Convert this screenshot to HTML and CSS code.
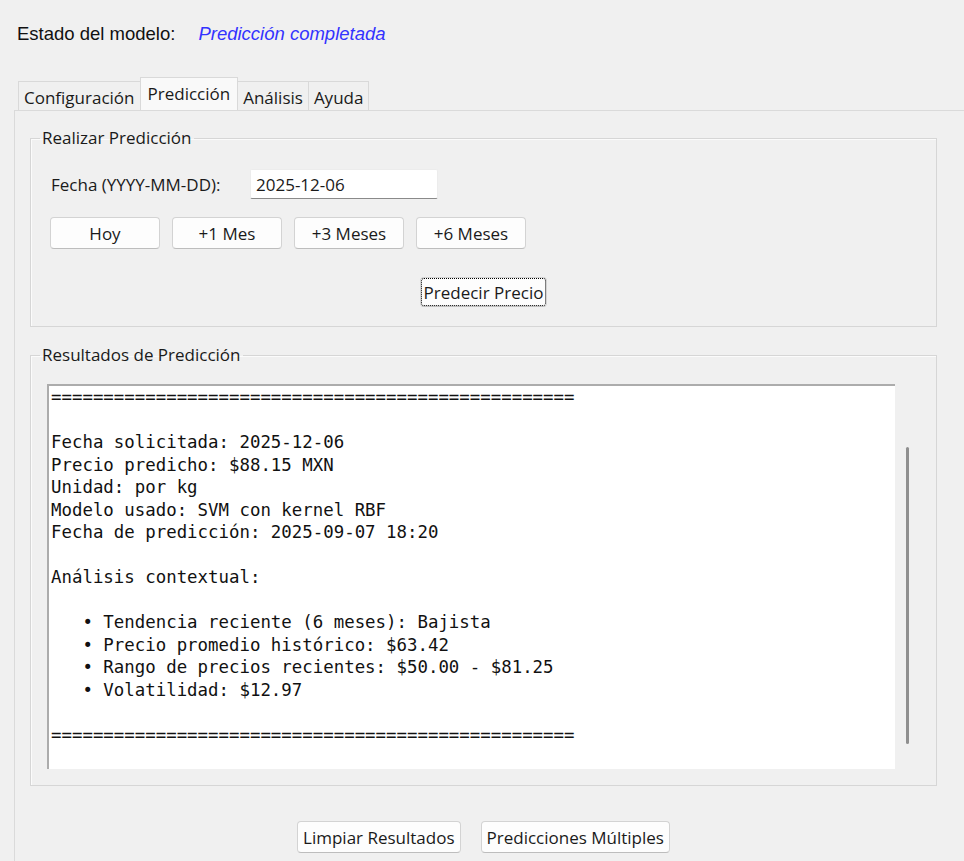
FILE: index.html
```html
<!DOCTYPE html>
<html lang="es">
<head>
<meta charset="utf-8">
<title>Predicción</title>
<link rel="stylesheet" href="styles.css">
</head>
<body>
<div class="status">
  <span class="status-label">Estado del modelo:</span>
  <span class="status-value">Predicción completada</span>
</div>
<div class="notebook">
  <div class="tabs">
    <div class="tab">Configuración</div>
    <div class="tab active">Predicción</div>
    <div class="tab">Análisis</div>
    <div class="tab">Ayuda</div>
  </div>
  <div class="pane">
    <fieldset class="group group-predict">
      <legend>Realizar Predicción</legend>
      <div class="group-body predict-body">
        <div class="date-row">
          <label class="date-label" for="fecha">Fecha (YYYY-MM-DD):</label>
          <input class="date-input" id="fecha" type="text" value="2025-12-06">
        </div>
        <div class="quick-row">
          <button class="btn btn-quick">Hoy</button>
          <button class="btn btn-quick">+1 Mes</button>
          <button class="btn btn-quick">+3 Meses</button>
          <button class="btn btn-quick">+6 Meses</button>
        </div>
        <div class="predict-row">
          <button class="btn btn-focus">Predecir Precio</button>
        </div>
      </div>
    </fieldset>
    <fieldset class="group group-results">
      <legend>Resultados de Predicción</legend>
      <div class="group-body results-body">
        <pre class="output">==================================================

Fecha solicitada: 2025-12-06
Precio predicho: $88.15 MXN
Unidad: por kg
Modelo usado: SVM con kernel RBF
Fecha de predicción: 2025-09-07 18:20

Análisis contextual:

   • Tendencia reciente (6 meses): Bajista
   • Precio promedio histórico: $63.42
   • Rango de precios recientes: $50.00 - $81.25
   • Volatilidad: $12.97

==================================================</pre>
        <div class="scrollbar"><div class="thumb"></div></div>
      </div>
    </fieldset>
    <div class="actions">
      <button class="btn btn-action">Limpiar Resultados</button>
      <button class="btn btn-action">Predicciones Múltiples</button>
    </div>
  </div>
</div>
</body>
</html>
```

FILE: styles.css
```css
* { box-sizing: border-box; }

html, body {
  margin: 0;
  padding: 0;
}

body {
  width: 964px;
  height: 861px;
  overflow: hidden;
  background: #f0f0f0;
  font-family: "Open Sans", "Noto Sans", sans-serif;
  font-size: 17px;
  color: #1a1a1a;
}

.status {
  display: flex;
  align-items: center;
  gap: 23px;
  height: 44px;
  padding: 23px 0 0 17px;
  font-family: "Liberation Sans", Arial, sans-serif;
  font-size: 18.5px;
  line-height: 22px;
  color: #111;
}

.status-value {
  color: #3333ff;
  font-style: italic;
}

.notebook {
  margin: 33px 0 0 14px;
}

.tabs {
  display: flex;
  align-items: flex-end;
  height: 33px;
  padding-left: 4px;
}

.tab {
  height: 29px;
  padding: 0 5px;
  line-height: 31px;
  background: #f0f0f0;
  border: 1px solid #d9d9d9;
  border-bottom: none;
  white-space: nowrap;
}

.tab + .tab { margin-left: -1px; }

.tab.active {
  height: 33px;
  padding: 0 7px;
  line-height: 32px;
  background: #f9f9f9;
  position: relative;
  z-index: 1;
}

.pane {
  height: 751px;
  padding: 16px 27px 0 15px;
  border-top: 1px solid #dadada;
  border-left: 1px solid #dadada;
}

.group {
  margin: 0;
  padding: 0;
  min-width: 0;
  border: 1px solid #d6d6d6;
  box-shadow: inset 1px 1px 0 #fbfbfb;
}

.group legend {
  margin-left: 9px;
  padding: 0 2px;
  line-height: 22px;
  color: #1a1a1a;
}

.predict-body {
  padding: 20px 19px 19px 19px;
}

.date-row {
  display: flex;
  align-items: center;
  height: 30px;
}

.date-label {
  flex: 0 0 200px;
  padding-left: 1px;
}

.date-input {
  width: 188px;
  height: 30px;
  padding: 0 5px;
  font: inherit;
  color: #1a1a1a;
  background: #fff;
  border: 1px solid #ececec;
  border-bottom: 1px solid #8a8a8a;
  border-radius: 2px;
  outline: none;
}

.quick-row {
  display: flex;
  gap: 12px;
  margin-top: 18px;
}

.btn {
  height: 32px;
  padding: 0 5px;
  font: inherit;
  color: #1a1a1a;
  background: #fdfdfd;
  border: 1px solid #d3d3d3;
  border-bottom-color: #bdbdbd;
  border-radius: 4px;
  white-space: nowrap;
}

.btn-quick { width: 110px; }

.predict-row {
  display: flex;
  justify-content: center;
  margin-top: 28px;
}

.btn-focus {
  height: 30px;
  padding: 0 3px;
  outline: 1px dotted #000;
  outline-offset: -2px;
}

.group-results { margin-top: 17px; }

.results-body {
  display: flex;
  height: 419px;
  padding: 18px 17px 16px 16px;
}

.output {
  flex: 1;
  margin: 0;
  padding: 0 0 0 2px;
  overflow: hidden;
  white-space: pre;
  font-family: "DejaVu Sans Mono", "Liberation Mono", monospace;
  font-size: 17.4px;
  line-height: 22.5px;
  color: #111;
  background: #fff;
  border-top: 2px solid #acacac;
  border-left: 2px solid #acacac;
}

.scrollbar {
  width: 24px;
  padding: 63px 0 0 11px;
}

.thumb {
  width: 3px;
  height: 297px;
  background: #8f8f8f;
  border-radius: 2px;
}

.actions {
  display: flex;
  justify-content: center;
  gap: 20px;
  margin-top: 35px;
}
```
